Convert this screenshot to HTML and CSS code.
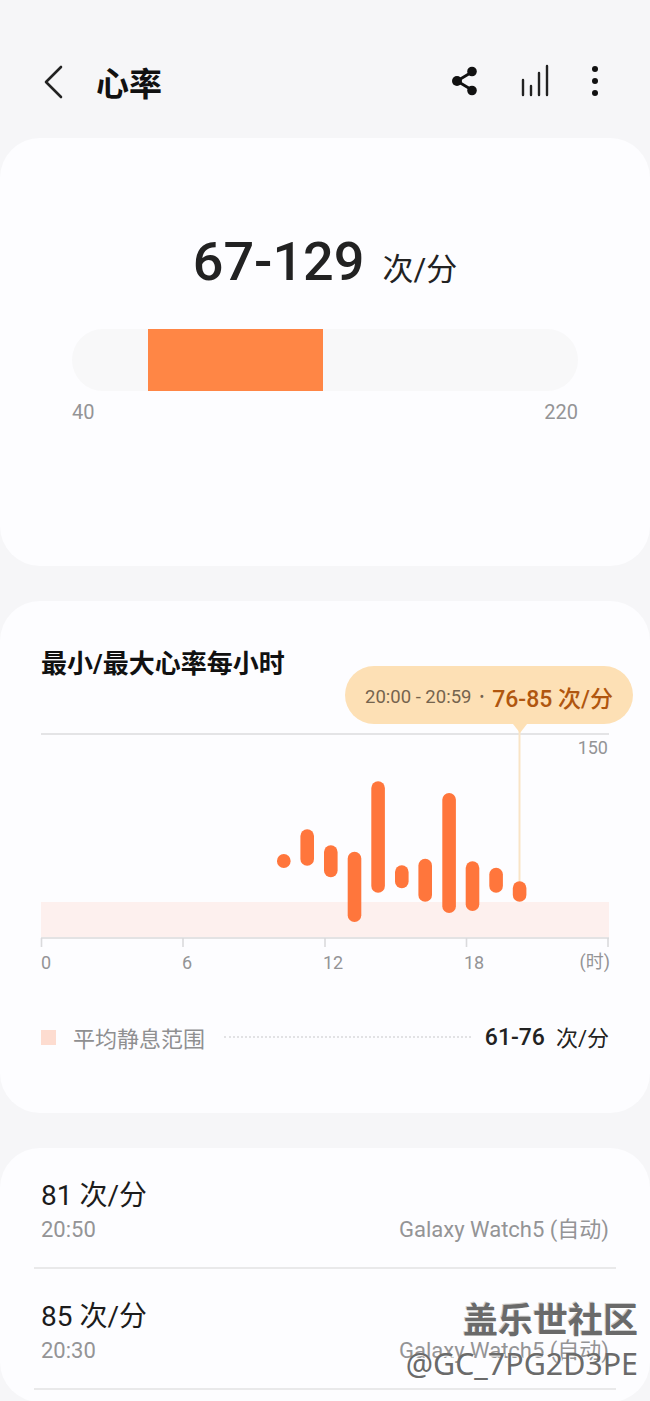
FILE: index.html
```html
<!DOCTYPE html>
<html lang="zh-CN">
<head>
  <meta charset="UTF-8">
  <meta name="viewport" content="width=device-width, initial-scale=1.0">
  <title>心率</title>
  <link rel="stylesheet" href="styles.css">
</head>
<body>
  <div class="page">

    <header class="top-bar">
      <svg class="back-icon" width="24" height="36" viewBox="0 0 24 36">
        <path d="M19 3 L4 18 L19 33" fill="none" stroke="#222" stroke-width="2.6" stroke-linecap="round" stroke-linejoin="round"/>
      </svg>
      <h1 class="page-title">心率</h1>
      <div class="top-actions">
        <svg width="30" height="32" viewBox="0 0 30 32">
          <path d="M21 7 L6 16 L21 25" fill="none" stroke="#111" stroke-width="2.8"/>
          <circle cx="21" cy="6.5" r="4.8" fill="#111"/>
          <circle cx="6" cy="16" r="5" fill="#111"/>
          <circle cx="21" cy="25.5" r="4.8" fill="#111"/>
        </svg>
        <svg width="32" height="34" viewBox="0 0 32 34">
          <path d="M4 16 V31 M12 22 V31 M20 9 V31 M28 2 V31" fill="none" stroke="#222" stroke-width="2.4" stroke-linecap="round"/>
        </svg>
        <svg width="12" height="32" viewBox="0 0 12 32">
          <circle cx="6" cy="4" r="3" fill="#111"/>
          <circle cx="6" cy="16" r="3" fill="#111"/>
          <circle cx="6" cy="28" r="3" fill="#111"/>
        </svg>
      </div>
    </header>

    <section class="card summary-card">
      <div class="summary-value">
        <span class="summary-num">67-129</span>
        <span class="summary-unit">次/分</span>
      </div>
      <div class="range-track">
        <div class="range-fill"></div>
      </div>
      <div class="range-labels">
        <span>40</span>
        <span>220</span>
      </div>
    </section>

    <section class="card chart-card">
      <h2 class="chart-title">最小/最大心率每小时</h2>
      <div class="chart-wrap">
        <svg class="chart" width="650" height="290" viewBox="0 690 650 290">
          <rect x="41" y="902" width="568" height="35" fill="#fdf0ee"/>
          <path d="M41 734 H609" stroke="#e4e4e6" stroke-width="2"/>
          <path d="M41 938 H609 M41.5 938 V947 M183 938 V947 M325 938 V947 M466.5 938 V947 M608 938 V947" fill="none" stroke="#dadadc" stroke-width="1.6"/>
          <path d="M519.5 724 V884" stroke="#f9e4c6" stroke-width="2"/>

          <g fill="#ff763c">
            <rect x="277" y="854" width="13.6" height="14" rx="6.8"/>
            <rect x="300.4" y="829.3" width="13.6" height="36.4" rx="6.8"/>
            <rect x="324" y="845.3" width="13.6" height="32" rx="6.8"/>
            <rect x="347.7" y="851.7" width="13.6" height="70.3" rx="6.8"/>
            <rect x="371.3" y="781.3" width="13.6" height="111.4" rx="6.8"/>
            <rect x="395" y="865.3" width="13.6" height="23" rx="6.8"/>
            <rect x="418.4" y="858.7" width="13.6" height="43" rx="6.8"/>
            <rect x="442.3" y="793" width="13.6" height="120" rx="6.8"/>
            <rect x="465.7" y="861.3" width="13.6" height="49.7" rx="6.8"/>
            <rect x="489.3" y="867.7" width="13.6" height="25" rx="6.8"/>
            <rect x="512.8" y="881.3" width="13.6" height="20.4" rx="6.8"/>
          </g>

          <g class="axis-text">
            <text x="608" y="754" text-anchor="end">150</text>
            <text x="41" y="969">0</text>
            <text x="182" y="969">6</text>
            <text x="323" y="969">12</text>
            <text x="464" y="969">18</text>
            <text x="610" y="968" text-anchor="end">(时)</text>
          </g>
        </svg>
        <div class="tooltip">
          <span class="tooltip-time">20:00 - 20:59</span>
          <span class="tooltip-dot">•</span>
          <span class="tooltip-value">76-85 次/分</span>
        </div>
      </div>
      <div class="legend">
        <span class="legend-swatch"></span>
        <span class="legend-label">平均静息范围</span>
        <span class="legend-dots"></span>
        <span class="legend-num">61-76</span>
        <span class="legend-unit">次/分</span>
      </div>
    </section>

    <section class="card list-card">
      <div class="list-row">
        <div class="list-value">81 次/分</div>
        <div class="list-meta">
          <span>20:50</span>
          <span>Galaxy Watch5 (自动)</span>
        </div>
      </div>
      <div class="list-row">
        <div class="list-value">85 次/分</div>
        <div class="list-meta">
          <span>20:30</span>
          <span>Galaxy Watch5 (自动)</span>
        </div>
      </div>
    </section>

    <div class="watermark">
      <div class="watermark-name">盖乐世社区</div>
      <div class="watermark-user">@GC_7PG2D3PE</div>
    </div>

  </div>
</body>
</html>
```

FILE: styles.css
```css
body {
  margin: 0;
  background: #f6f6f8;
  font-family: Roboto, "Noto Sans CJK SC", sans-serif;
  color: #222;
}

.page {
  position: relative;
  width: 650px;
  height: 1401px;
  overflow: hidden;
}

/* top bar */
.top-bar {
  display: flex;
  align-items: center;
  height: 138px;
  padding: 26px 49px 0 42px;
  box-sizing: border-box;
}

.back-icon {
  margin-top: 0;
}

.page-title {
  margin: 0 0 0 30px;
  font-size: 33px;
  font-weight: 700;
  color: #111;
}

.top-actions {
  display: flex;
  align-items: center;
  gap: 38px;
  margin-left: auto;
  margin-top: -2px;
}

/* cards */
.card {
  background: #fdfdff;
  border-radius: 40px;
  margin-bottom: 35px;
}

.summary-card {
  height: 428px;
  padding: 89px 72px 0;
  box-sizing: border-box;
}

.summary-value {
  display: flex;
  justify-content: center;
  align-items: baseline;
  gap: 18px;
  height: 70px;
  line-height: 70px;
}

.summary-num {
  font-size: 54px;
  font-weight: 500;
}

.summary-unit {
  font-size: 31px;
}

.range-track {
  height: 62px;
  margin-top: 32px;
  background: #f8f8f9;
  border-radius: 31px;
}

.range-fill {
  width: 175px;
  height: 62px;
  margin-left: 76px;
  background: #ff8645;
}

.range-labels {
  display: flex;
  justify-content: space-between;
  margin-top: 9px;
  font-size: 20px;
  line-height: 24px;
  color: #949496;
}

/* chart */
.chart-card {
  height: 512px;
  padding-top: 45px;
  box-sizing: border-box;
}

.chart-title {
  margin: 0 0 8px 41px;
  font-size: 26px;
  line-height: 36px;
  font-weight: 700;
  color: #111;
}

.chart-wrap {
  position: relative;
}

.chart {
  display: block;
}

.axis-text text {
  font-size: 18px;
  fill: #949496;
}

.tooltip {
  position: absolute;
  left: 345px;
  top: -24px;
  display: flex;
  align-items: center;
  width: 288px;
  height: 58px;
  padding: 4px 0 0 20px;
  box-sizing: border-box;
  background: #fde0b5;
  border-radius: 29px;
}

.tooltip::after {
  content: "";
  position: absolute;
  left: 168px;
  top: 58px;
  border-left: 7px solid transparent;
  border-right: 7px solid transparent;
  border-top: 9px solid #fde0b5;
}

.tooltip-time {
  font-size: 18.5px;
  color: #75644e;
}

.tooltip-dot {
  margin: 0 8px;
  font-size: 14px;
  color: #75644e;
}

.tooltip-value {
  font-size: 23px;
  font-weight: 500;
  color: #b0560f;
  white-space: nowrap;
}

.legend {
  display: flex;
  align-items: center;
  height: 30px;
  margin: 42px 41px 0;
}

.legend-swatch {
  width: 15px;
  height: 15px;
  background: #fddcd0;
}

.legend-label {
  margin-left: 17px;
  font-size: 22px;
  color: #8f8f91;
}

.legend-dots {
  flex: 1;
  margin: 0 14px 0 19px;
  border-top: 2px dotted #e2e2e4;
}

.legend-num {
  font-size: 23px;
  font-weight: 500;
}

.legend-unit {
  margin: -3px 0 0 11px;
  font-size: 22px;
}

/* list */
.list-card {
  height: 254px;
  margin-bottom: 0;
  padding: 0 34px;
  box-sizing: border-box;
}

.list-row {
  height: 121px;
  padding: 30px 7px 0;
  box-sizing: border-box;
  border-bottom: 2px solid #e9e9ea;
}

.list-value {
  height: 36px;
  font-size: 28px;
  line-height: 36px;
  color: #1c1c1c;
}

.list-meta {
  display: flex;
  justify-content: space-between;
  margin-top: 1px;
  font-size: 22px;
  line-height: 30px;
  color: #949496;
}

/* watermark over the list */
.watermark {
  position: absolute;
  right: 12px;
  bottom: 19px;
  text-align: right;
  color: #6a6a6a;
}

.watermark-name {
  font-size: 35px;
  line-height: 46px;
  font-weight: 700;
  text-shadow: 1px 1px 0 #fff, -1px -1px 0 #ccc;
}

.watermark-user {
  margin-top: 1px;
  font-size: 30.4px;
  line-height: 36px;
  font-family: "Noto Sans", sans-serif;
  text-shadow: 1px 1px 0 #fff;
}
```
